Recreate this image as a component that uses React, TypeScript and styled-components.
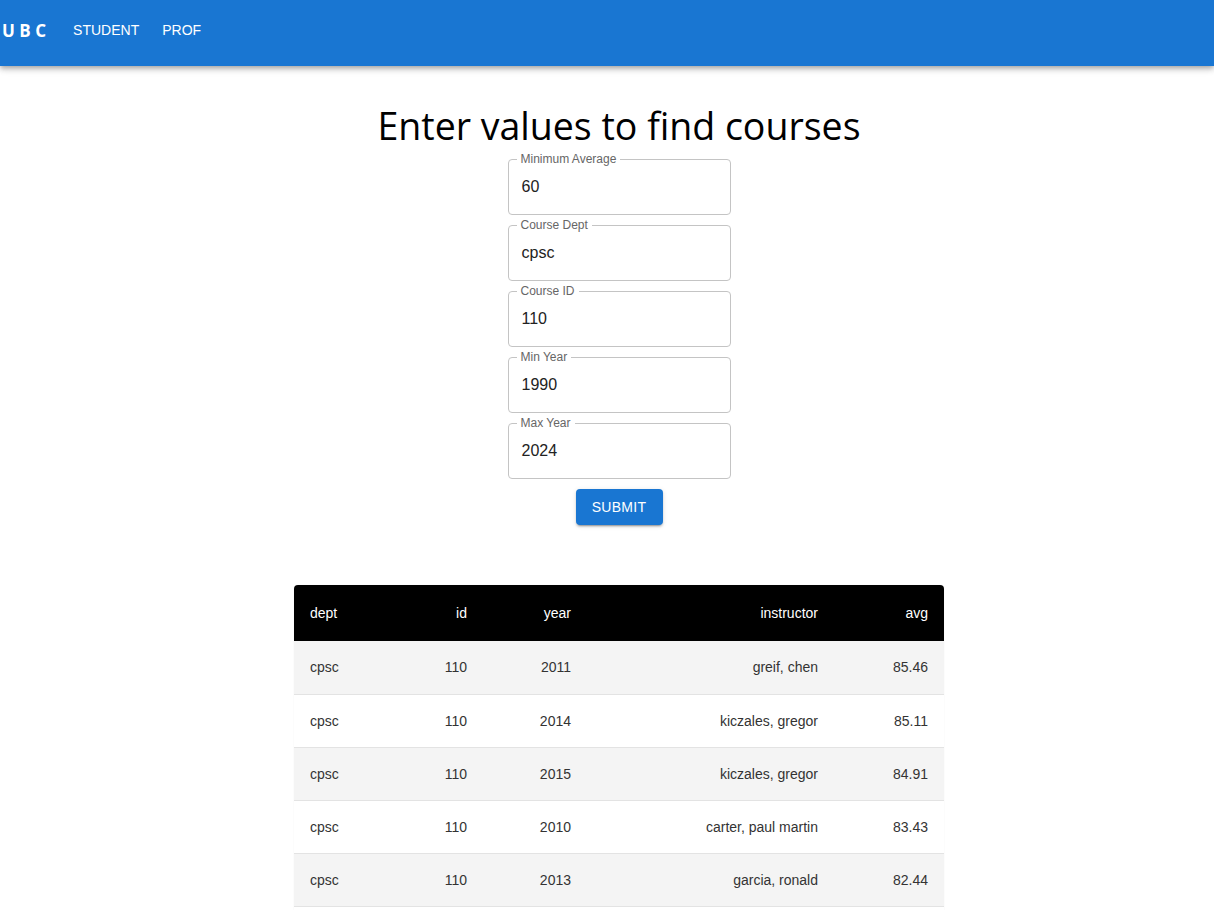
import React from "react";
import styled, { createGlobalStyle } from "styled-components";

const GlobalStyle = createGlobalStyle`
  html, body { margin: 0; padding: 0; background: #fff; }
  body { font-family: "Liberation Sans", Arial, sans-serif; }
  * { box-sizing: border-box; }
`;

const AppBar = styled.header`
  height: 66px;
  background: #1976d2;
  color: #fff;
  display: flex;
  align-items: center;
  padding: 0 0 6px 2px;
  box-shadow: 0 2px 4px -1px rgba(0,0,0,0.2), 0 4px 5px 0 rgba(0,0,0,0.14), 0 1px 10px 0 rgba(0,0,0,0.12);
  position: relative;
  z-index: 1;
`;

const Logo = styled.div`
  font-family: "Open Sans", "Noto Sans", sans-serif;
  font-weight: 700;
  font-size: 17px;
  letter-spacing: 4.5px;
  margin-right: 11px;
`;

const NavLink = styled.a`
  font-family: "Liberation Sans", Arial, sans-serif;
  font-size: 14px;
  color: #fff;
  text-transform: uppercase;
  padding: 6px 11.5px;
  cursor: pointer;
`;

const Main = styled.main`
  display: flex;
  flex-direction: column;
  align-items: center;
  padding-left: 24px;
`;

const Title = styled.h1`
  font-family: "Open Sans", "Noto Sans", sans-serif;
  font-weight: 400;
  font-size: 37.5px;
  color: #000;
  margin: 34px 0 0;
  line-height: 52px;
`;

const Form = styled.form`
  display: flex;
  flex-direction: column;
  align-items: center;
  gap: 10px;
  margin-top: 7px;
`;

const Field = styled.div`
  position: relative;
  width: 223px;
  height: 56px;
  border: 1px solid #c4c4c4;
  border-radius: 4px;
  display: flex;
  align-items: center;
  padding: 0 13px;
`;

const FieldLabel = styled.span`
  position: absolute;
  top: -8px;
  left: 8px;
  padding: 0 4px;
  background: #fff;
  font-size: 12px;
  line-height: 14px;
  color: #666;
`;

const FieldValue = styled.span`
  font-size: 16px;
  color: #222;
`;

const SubmitButton = styled.button`
  width: 87px;
  height: 36px;
  border: none;
  border-radius: 4px;
  background: #1976d2;
  color: #fff;
  font-family: "Liberation Sans", Arial, sans-serif;
  font-size: 14px;
  letter-spacing: 0.3px;
  text-transform: uppercase;
  box-shadow: 0 3px 1px -2px rgba(0,0,0,0.2), 0 2px 2px 0 rgba(0,0,0,0.14), 0 1px 5px 0 rgba(0,0,0,0.12);
  cursor: pointer;
`;

const TableWrap = styled.div`
  margin-top: 60px;
  width: 650px;
  border-radius: 4px;
  overflow: hidden;
  box-shadow: 0 0 1px rgba(0,0,0,0.15);
`;

const Table = styled.table`
  width: 100%;
  border-collapse: collapse;
  table-layout: fixed;
  font-size: 14px;
`;

const HeadCell = styled.th<{ $w: number; $align: string }>`
  width: ${(p) => p.$w}px;
  text-align: ${(p) => p.$align};
  background: #000;
  color: #fff;
  font-weight: 400;
  height: 56px;
  padding: 0 16px;
`;

const Row = styled.tr<{ $alt: boolean }>`
  background: ${(p) => (p.$alt ? "#f4f4f4" : "#fff")};
  border-bottom: 1px solid #e3e3e3;
`;

const Cell = styled.td<{ $align: string }>`
  text-align: ${(p) => p.$align};
  color: #333;
  height: 53px;
  padding: 0 16px;
`;

const columns = [
  { key: "dept", w: 100, align: "left" },
  { key: "id", w: 89, align: "right" },
  { key: "year", w: 104, align: "right" },
  { key: "instructor", w: 247, align: "right" },
  { key: "avg", w: 110, align: "right" },
];

const rows = [
  ["cpsc", "110", "2011", "greif, chen", "85.46"],
  ["cpsc", "110", "2014", "kiczales, gregor", "85.11"],
  ["cpsc", "110", "2015", "kiczales, gregor", "84.91"],
  ["cpsc", "110", "2010", "carter, paul martin", "83.43"],
  ["cpsc", "110", "2013", "garcia, ronald", "82.44"],
  ["cpsc", "110", "2012", "kiczales, gregor", "82.10"],
];

const fields = [
  ["Minimum Average", "60"],
  ["Course Dept", "cpsc"],
  ["Course ID", "110"],
  ["Min Year", "1990"],
  ["Max Year", "2024"],
];

export default function App() {
  return (
    <>
      <GlobalStyle />
      <AppBar>
        <Logo>UBC</Logo>
        <NavLink>Student</NavLink>
        <NavLink>Prof</NavLink>
      </AppBar>
      <Main>
        <Title>Enter values to find courses</Title>
        <Form onSubmit={(e) => e.preventDefault()}>
          {fields.map(([label, value]) => (
            <Field key={label}>
              <FieldLabel>{label}</FieldLabel>
              <FieldValue>{value}</FieldValue>
            </Field>
          ))}
          <SubmitButton type="submit">Submit</SubmitButton>
        </Form>
        <TableWrap>
          <Table>
            <thead>
              <tr>
                {columns.map((c) => (
                  <HeadCell key={c.key} $w={c.w} $align={c.align}>
                    {c.key}
                  </HeadCell>
                ))}
              </tr>
            </thead>
            <tbody>
              {rows.map((r, i) => (
                <Row key={i} $alt={i % 2 === 0}>
                  {r.map((v, j) => (
                    <Cell key={j} $align={columns[j].align}>
                      {v}
                    </Cell>
                  ))}
                </Row>
              ))}
            </tbody>
          </Table>
        </TableWrap>
      </Main>
    </>
  );
}
